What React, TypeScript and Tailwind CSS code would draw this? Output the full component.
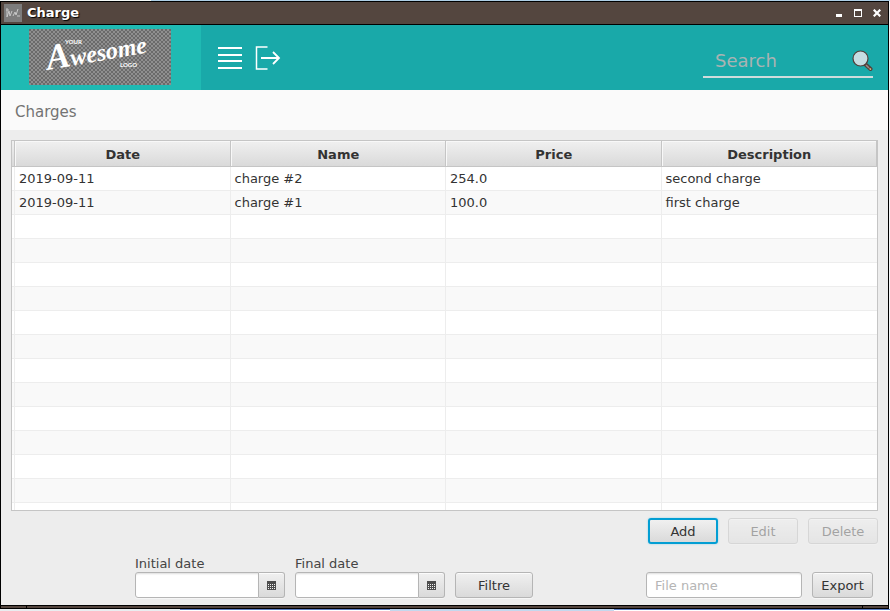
import React from "react";

const columns = ["Date", "Name", "Price", "Description"];
const charges = [
  ["2019-09-11", "charge #2", "254.0", "second charge"],
  ["2019-09-11", "charge #1", "100.0", "first charge"],
];
const emptyRows = Array.from({ length: 13 }, () => ["", "", "", ""]);

const buttonBase =
  "h-[26px] rounded-[3px] border border-[#b5b5b5] bg-linear-to-b from-[#f0f0f0] to-[#dadada] pt-px text-[#333333] shadow-[inset_0_1px_0_#fbfbfb,0_1px_0_#f6f6f6]";
const fieldBase =
  "h-[26px] min-w-0 border border-[#b5b5b5] bg-white text-[#333333] shadow-[inset_0_2px_2px_-1px_#dddddd,0_1px_0_#f6f6f6] outline-none";

function Logo() {
  return (
    <svg className="h-14 w-[142px]" viewBox="0 0 142 56" role="img" aria-label="Your Awesome Logo">
      <defs>
        <pattern id="checks" width="4" height="4" patternUnits="userSpaceOnUse">
          <rect width="4" height="4" fill="#8f8f8f" />
          <rect width="2" height="2" fill="#6a6a6a" />
          <rect x="2" y="2" width="2" height="2" fill="#6a6a6a" />
        </pattern>
      </defs>
      <rect width="142" height="56" fill="url(#checks)" />
      <g fill="#ffffff">
        <text transform="translate(19 41) rotate(-10)" className="font-['Liberation_Serif',serif] text-[24px] font-bold italic">
          <tspan className="text-[36px]">A</tspan>wesome
        </text>
        <text x="36" y="15" className="font-[Lato,sans-serif] text-[6px] font-bold">YOUR</text>
        <text x="91" y="38" className="font-[Lato,sans-serif] text-[6px] font-bold">LOGO</text>
      </g>
    </svg>
  );
}

function TitleBar() {
  return (
    <header className="flex h-[23px] shrink-0 items-center border-b border-black bg-[#54463f] pr-[2px] pl-[3px] text-white">
      <svg className="size-[18px]" viewBox="0 0 18 18" aria-hidden="true">
        <rect width="18" height="18" fill="#7c7c7c" />
        <path d="M3 13V4M3 13L5 7L6 12L8 7M9 12L11 8L12 11L14 5M13 12H16M2 6H5" fill="none" stroke="#c8c8c8" />
      </svg>
      <h1 className="ml-[5px] flex-1 text-[13px] leading-4 font-bold [text-shadow:1px_1px_1px_#000000]">Charge</h1>
      <div className="flex items-center gap-px">
        <button aria-label="Minimize" className="grid size-[18px] place-items-center">
          <svg width="10" height="10" viewBox="0 0 10 10"><path d="M2 6H8V9H2Z" fill="#ffffff" /></svg>
        </button>
        <button aria-label="Maximize" className="grid size-[18px] place-items-center">
          <svg width="8" height="8" viewBox="0 0 8 8"><path d="M0 0H8V8H0ZM1 2V7H7V2Z" fill="#ffffff" fillRule="evenodd" /></svg>
        </button>
        <button aria-label="Close" className="grid size-[18px] place-items-center">
          <svg width="8" height="8" viewBox="0 0 8 8"><path d="M0.7 0.7L7.3 7.3M7.3 0.7L0.7 7.3" stroke="#ffffff" strokeWidth="2.2" /></svg>
        </button>
      </div>
    </header>
  );
}

function Toolbar() {
  return (
    <div className="flex h-[65px] shrink-0 bg-[#19a9a9]">
      <div className="flex w-[200px] items-start bg-[#1fbab3] pt-1 pl-7">
        <Logo />
      </div>
      <nav className="flex items-center gap-[13px] pl-[17px]">
        <button aria-label="Menu">
          <svg width="24" height="24" viewBox="0 0 24 24"><path d="M0 2H24M0 9H24M0 15H24M0 22H24" stroke="#ffffff" strokeWidth="2" /></svg>
        </button>
        <button aria-label="Log out">
          <svg width="26" height="24" viewBox="0 0 26 24" fill="none" stroke="#ffffff">
            <path d="M12.500 1H1.500V23H12.500" strokeWidth="1.500" />
            <path d="M6 12H24M18 6L24 12L18 18" strokeWidth="1.800" />
          </svg>
        </button>
      </nav>
      <form className="mt-[19px] mr-[15px] ml-auto flex h-[34px] w-[170px] items-center border-b-2 border-[#cfdcdc] pl-3" role="search">
        <input
          aria-label="Search"
          type="text"
          placeholder="Search"
          className="h-7 min-w-0 flex-1 bg-transparent text-[18px] text-white outline-none placeholder:text-[#a9b3b3]"
        />
        <button type="button" aria-label="Run search">
          <svg width="21" height="21" viewBox="0 0 21 21">
            <path d="M13.500 14.500L18.500 19" stroke="#533f3a" strokeWidth="4" strokeLinecap="round" />
            <path d="M14 15L17 18" stroke="#9a8d88" strokeWidth="1.500" />
            <path d="M17.500 18.500L19 19.500" stroke="#f2cf8e" strokeWidth="1.500" />
            <circle cx="8.500" cy="8.500" r="7.500" fill="#c5dde2" stroke="#533f3a" strokeWidth="1.200" />
          </svg>
        </button>
      </form>
    </div>
  );
}

function ChargeTable() {
  return (
    <div className="min-h-0 flex-1 overflow-hidden border border-[#c5c5c5] bg-white">
      <table className="w-full table-fixed border-separate border-spacing-0">
        <thead>
          <tr className="h-[26px] bg-linear-to-b from-[#f0f0f0] to-[#d9d9d9]">
            <td className="w-[3px] border-r border-b border-[#c5c5c5] p-0" />
            {columns.map((name) => (
              <th key={name} scope="col" className="border-r border-b border-[#c5c5c5] pt-[2px] pr-0 pb-0 pl-px text-[13px] leading-4 font-bold text-[#333333] shadow-[inset_1px_1px_0_#f8f8f8]">
                {name}
              </th>
            ))}
          </tr>
        </thead>
        <tbody>
          {[...charges, ...emptyRows].map((row, r) => (
            <tr key={r} className="h-6 bg-white even:bg-[#f9f9f9]">
              <td className="border-r border-b border-[#ededed] p-0" />
              {row.map((value, c) => (
                <td key={c} className="border-r border-b border-[#ededed] py-0 pr-0 pl-1 text-[13px] leading-4 text-[#333333] last:border-r-0">
                  {value}
                </td>
              ))}
            </tr>
          ))}
        </tbody>
      </table>
    </div>
  );
}

function DateField({ id, label }: { id: string; label: string }) {
  return (
    <div className="w-[150px]">
      <label htmlFor={id} className="block h-[18px] leading-5 text-[#444444]">{label}</label>
      <div className="flex">
        <input id={id} type="text" className={`${fieldBase} flex-1 rounded-l-[3px] px-2`} />
        <button aria-label={`Pick ${label.toLowerCase()}`} className={`${buttonBase} grid w-[26px] place-items-center rounded-l-none border-l-0`}>
          <svg width="9" height="9" viewBox="0 0 9 9" aria-hidden="true">
            <rect width="9" height="9" fill="#4d4d4d" />
            <path d="M1 3.500H8M1 5.500H8M1 7.500H8" stroke="#f2f2f2" strokeDasharray="1 1" />
          </svg>
        </button>
      </div>
    </div>
  );
}

export default function App() {
  return (
    <div className="flex h-screen flex-col bg-[#f4f6f8] pr-px font-['DejaVu_Sans',sans-serif] text-[13px]">
      <div className="mr-[-1px] flex h-px shrink-0">
        <div className="w-[151px] bg-[#f4f8f6]" />
        <div className="flex-1 bg-[#aecfe6]" />
      </div>
      <div className="flex min-h-0 flex-1 flex-col border border-black bg-[#54463f]">
        <TitleBar />
        <Toolbar />
        <h2 className="flex h-10 shrink-0 items-center bg-[#fafafa] pt-1 pl-[14px] text-[15px] text-[#737373]">Charges</h2>
        <main className="flex min-h-0 flex-1 flex-col bg-[#ededed] px-[10px] pt-[10px] pb-[7px]">
          <ChargeTable />
          <div className="mt-[7px] flex justify-end gap-[10px]">
            <button className="h-[26px] w-[70px] rounded-[3px] border-2 border-[#039ed3] bg-linear-to-b from-[#f0f0f0] to-[#dadada] pt-px text-[#333333] shadow-[0_0_2px_#8fd0e8]">Add</button>
            <button disabled className={`${buttonBase} w-[70px] opacity-40`}>Edit</button>
            <button disabled className={`${buttonBase} w-[70px] opacity-40`}>Delete</button>
          </div>
          <div className="mt-[10px] flex items-end gap-[10px] pr-[5px] pl-[124px]">
            <DateField id="initial-date" label="Initial date" />
            <DateField id="final-date" label="Final date" />
            <button className={`${buttonBase} w-[78px]`}>Filtre</button>
            <input aria-label="File name" type="text" placeholder="File name" className={`${fieldBase} ml-auto w-[156px] rounded-[3px] px-2 placeholder:text-[#b5b5b5]`} />
            <button className={`${buttonBase} w-[61px]`}>Export</button>
          </div>
        </main>
        <div className="flex h-[3px] shrink-0 justify-between border-t border-black px-[25px]">
          <div className="w-px bg-black" />
          <div className="w-px bg-black" />
        </div>
      </div>
      <div className="mr-[-1px] flex h-[2px] shrink-0">
        <div className="w-[180px] bg-[#e9edf0]" />
        <div className="flex-1 border-t border-[#5b7bc0] bg-white" />
        <div className="w-[224px] bg-[#c3d8ee]" />
        <div className="w-[276px] border-t border-[#5b7bc0] bg-white" />
      </div>
    </div>
  );
}
